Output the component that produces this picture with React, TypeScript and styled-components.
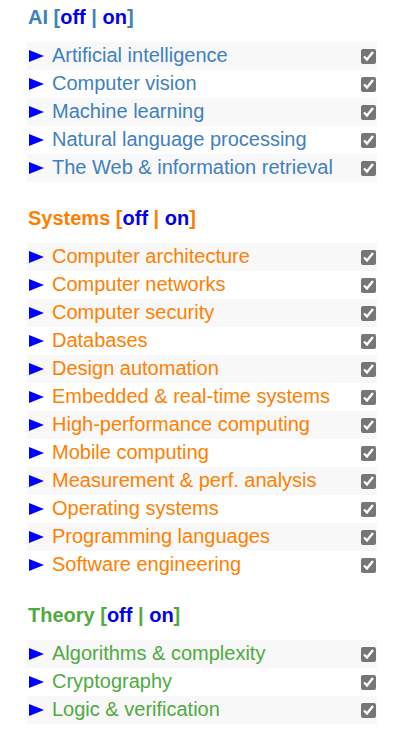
import React from "react";
import styled, { createGlobalStyle } from "styled-components";

const Global = createGlobalStyle`
  html, body { margin: 0; padding: 0; background: #ffffff; }
  body { font-family: "Liberation Sans", Arial, sans-serif; }
`;

const Page = styled.div`
  padding: 5px 0 0 27px;
  width: 350px;
`;

const Section = styled.section`
  margin-bottom: 24px;
`;

const Heading = styled.h2<{ $color: string }>`
  margin: 0 0 13px 1px;
  font-size: 20px;
  line-height: 24px;
  font-weight: bold;
  color: ${(p) => p.$color};
`;

const Toggle = styled.a`
  color: #0000ee;
  text-decoration: none;
  cursor: pointer;
`;

const List = styled.ul`
  list-style: none;
  margin: 0;
  padding: 0;
`;

const Row = styled.li<{ $color: string }>`
  display: flex;
  align-items: center;
  height: 28px;
  padding: 0 1px 0 2px;
  color: ${(p) => p.$color};
  font-size: 20px;
  &:nth-child(odd) { background: #f8f8f8; }
`;

const Arrow = styled.span`
  width: 0;
  height: 0;
  border-left: 15px solid #0000ff;
  border-top: 6.5px solid transparent;
  border-bottom: 6.5px solid transparent;
  margin: 0 8px 1px 0;
  flex: none;
`;

const Label = styled.span`
  flex: 1;
  line-height: 26px;
  padding-bottom: 2px;
  white-space: nowrap;
`;

const Check = styled.input`
  width: 15px;
  height: 15px;
  margin: 1px 0 0 0;
  accent-color: #767676;
  flex: none;
`;

type Group = { name: string; color: string; items: string[] };

const groups: Group[] = [
  {
    name: "AI",
    color: "#3f80c0",
    items: [
      "Artificial intelligence",
      "Computer vision",
      "Machine learning",
      "Natural language processing",
      "The Web & information retrieval",
    ],
  },
  {
    name: "Systems",
    color: "#ff8000",
    items: [
      "Computer architecture",
      "Computer networks",
      "Computer security",
      "Databases",
      "Design automation",
      "Embedded & real-time systems",
      "High-performance computing",
      "Mobile computing",
      "Measurement & perf. analysis",
      "Operating systems",
      "Programming languages",
      "Software engineering",
    ],
  },
  {
    name: "Theory",
    color: "#4fab3f",
    items: ["Algorithms & complexity", "Cryptography", "Logic & verification"],
  },
];

export default function App() {
  return (
    <Page>
      <Global />
      {groups.map((g) => (
        <Section key={g.name}>
          <Heading $color={g.color}>
            {g.name} [<Toggle>off</Toggle> | <Toggle>on</Toggle>]
          </Heading>
          <List>
            {g.items.map((it) => (
              <Row key={it} $color={g.color}>
                <Arrow />
                <Label>{it}</Label>
                <Check type="checkbox" defaultChecked />
              </Row>
            ))}
          </List>
        </Section>
      ))}
    </Page>
  );
}
